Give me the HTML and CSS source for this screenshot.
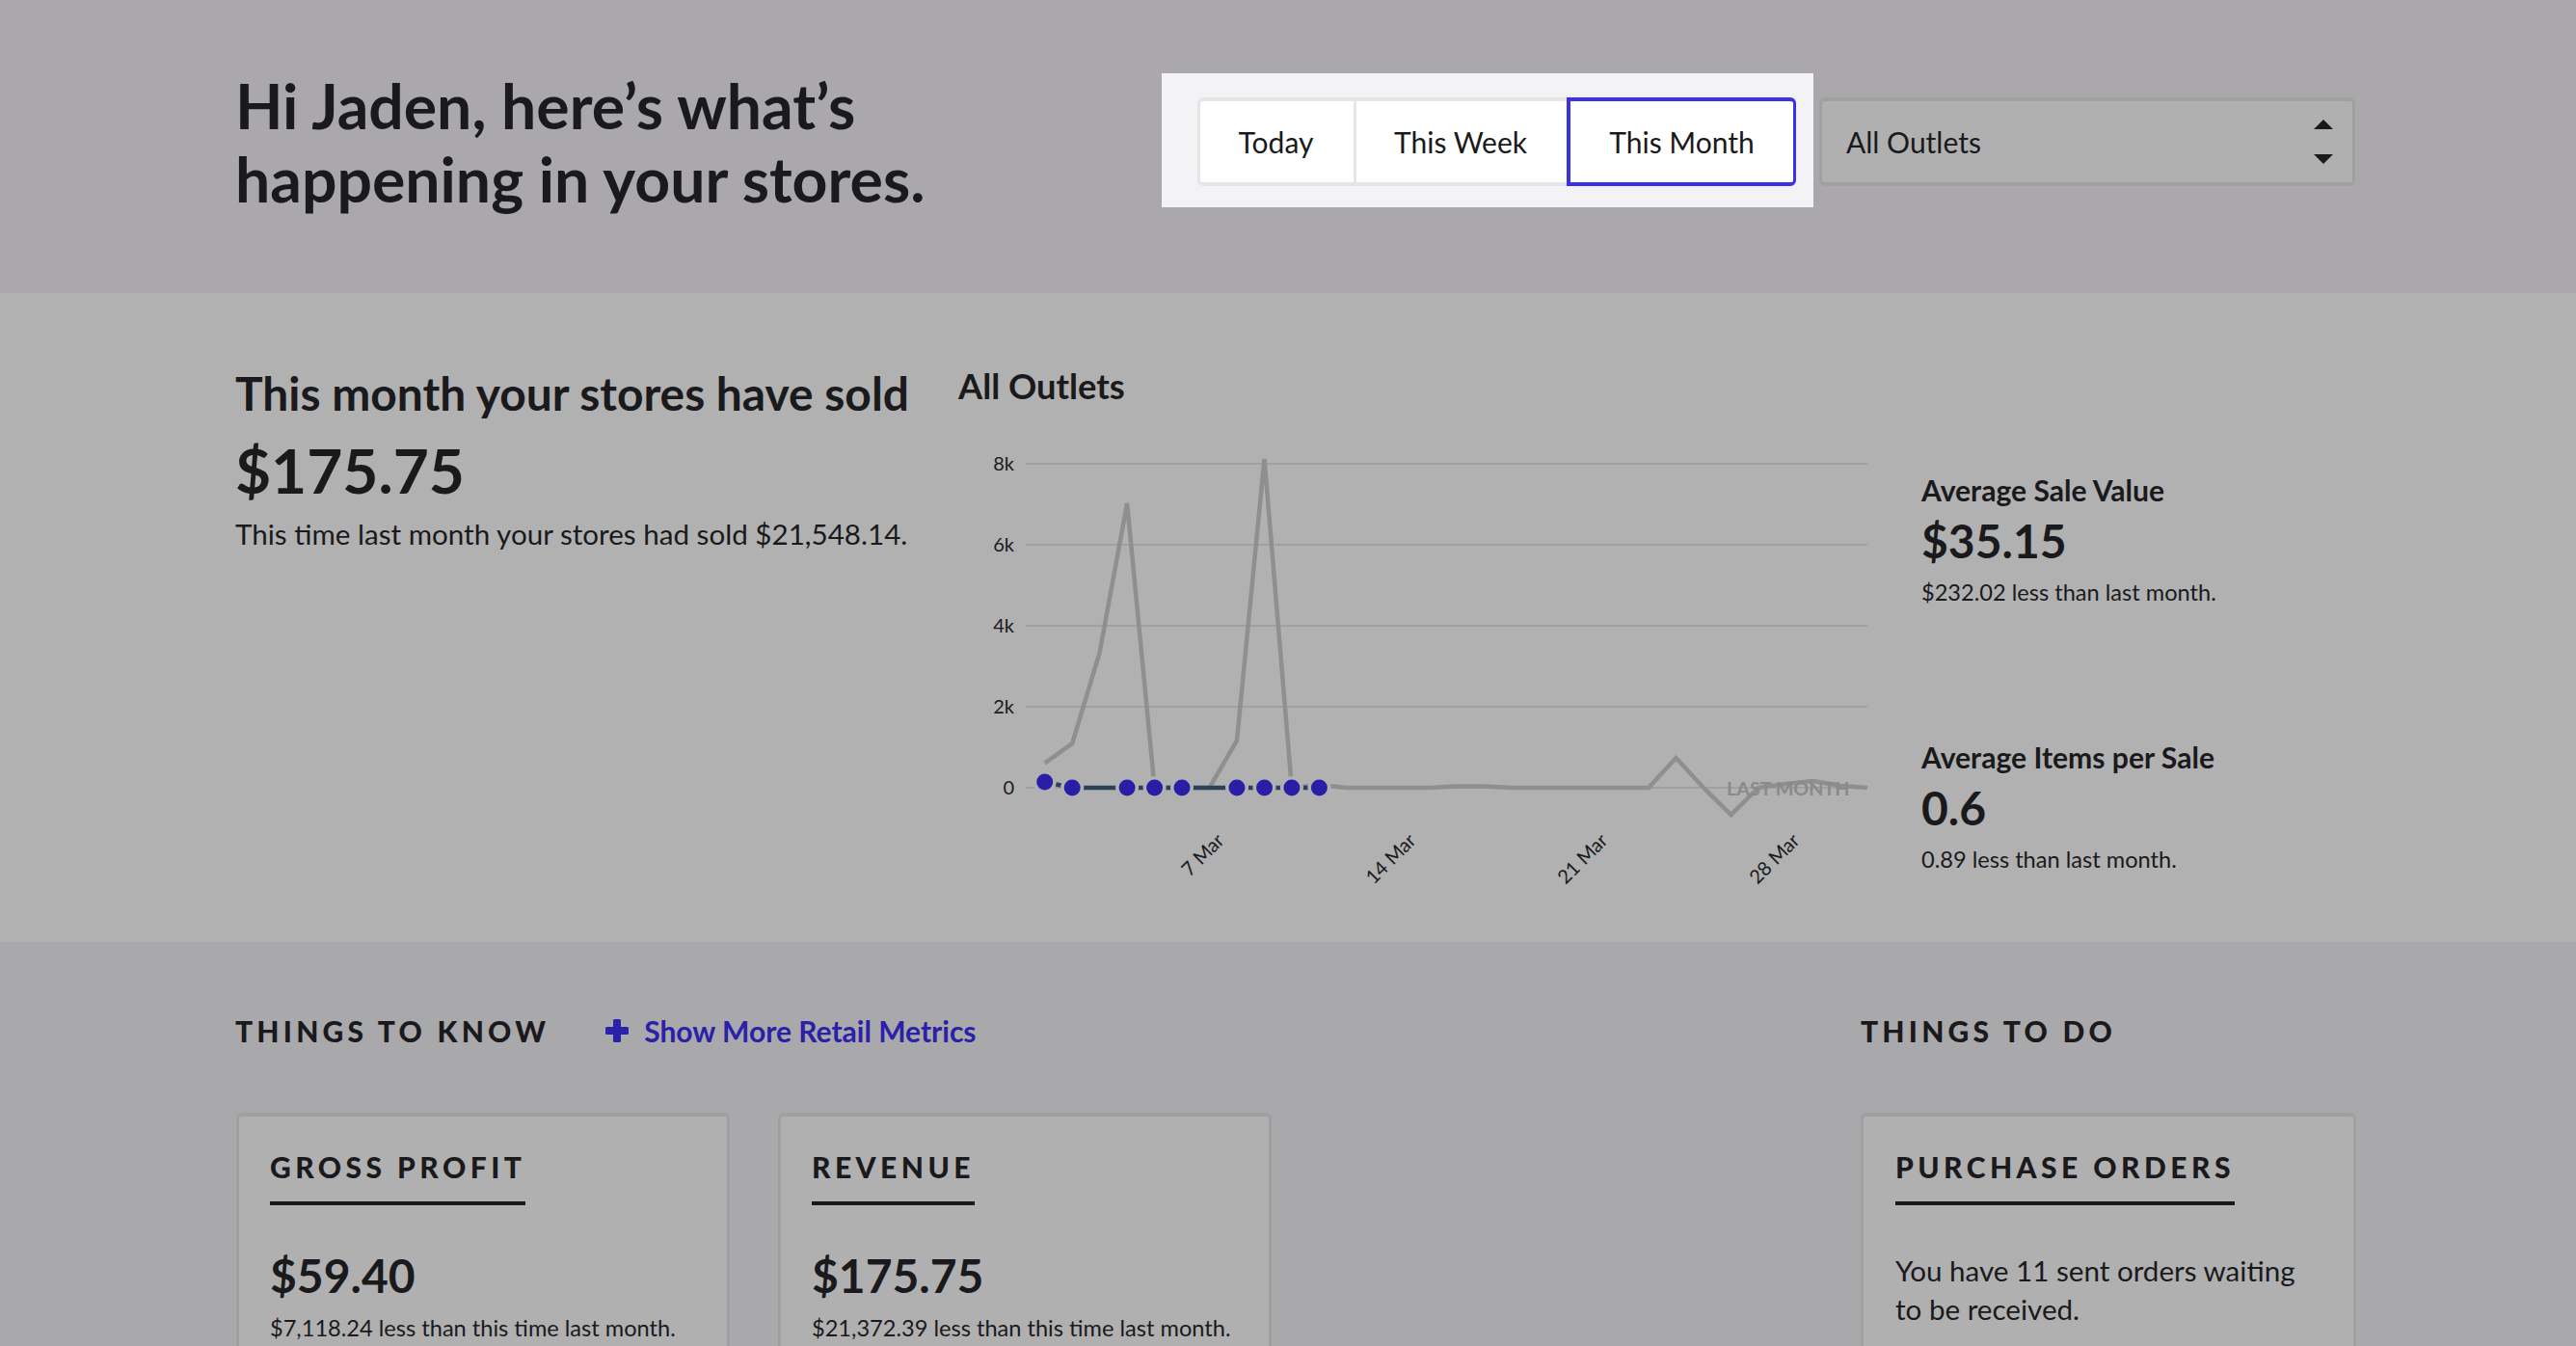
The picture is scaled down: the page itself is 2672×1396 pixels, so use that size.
FILE: index.html
```html
<!DOCTYPE html>
<html lang="en">
<head>
<meta charset="utf-8">
<title>Dashboard</title>
<link rel="stylesheet" href="styles.css">
</head>
<body>
<header class="hero">
  <div class="wrap hero-row">
    <h1 class="greeting">Hi Jaden, here’s what’s<br>happening in your stores.</h1>
    <div class="spot">
      <div class="seg">
        <button class="seg-btn">Today</button>
        <button class="seg-btn">This Week</button>
        <button class="seg-btn active">This Month</button>
      </div>
    </div>
    <div class="select">
      <span>All Outlets</span>
      <span class="arrows"><i class="up"></i><i class="down"></i></span>
    </div>
  </div>
</header>
<section class="sales">
  <div class="wrap sales-row">
    <div class="summary">
      <h2>This month your stores have sold</h2>
      <div class="big">$175.75</div>
      <p>This time last month your stores had sold $21,548.14.</p>
    </div>
    <div class="chart">
      <h3>All Outlets</h3>
      <svg class="plot" width="950" height="510" viewBox="0 0 950 510" xmlns="http://www.w3.org/2000/svg">
        <g transform="translate(-993 -420)">
          <g class="grid">
            <line x1="1063" x2="1936" y1="481" y2="481"/>
            <line x1="1063" x2="1936" y1="565" y2="565"/>
            <line x1="1063" x2="1936" y1="649" y2="649"/>
            <line x1="1063" x2="1936" y1="733" y2="733"/>
            <line x1="1063" x2="1936" y1="817" y2="817"/>
          </g>
          <g class="ylab">
            <text x="1051" y="488">8k</text>
            <text x="1051" y="572">6k</text>
            <text x="1051" y="656">4k</text>
            <text x="1051" y="740">2k</text>
            <text x="1051" y="824">0</text>
          </g>
          <polyline class="last" points="1082.7,791.5 1111.2,771 1139.6,677 1168.1,522 1196.6,817 1225,817 1253.5,817 1282,768 1310.5,476 1338.9,817 1367.4,814 1395.9,817 1424.3,817 1452.8,817 1481.3,817 1509.8,815.5 1538.2,815.5 1566.7,817 1595.2,817 1623.6,817 1652.1,817 1680.6,817 1709,817 1737.5,786 1766,817 1794.5,845 1822.9,817 1851.4,813 1879.9,810 1908.3,815 1936,817"/>
          <text class="lastlab" x="1790" y="825">LAST MONTH</text>
          <polyline class="cur" points="1082.7,811 1111.2,817 1139.6,817 1168.1,817 1196.6,817 1225,817 1253.5,817 1282,817 1310.5,817 1338.9,817 1367.4,817"/>
          <g class="dots">
            <circle cx="1082.7" cy="811" r="8.5"/>
            <circle cx="1111.2" cy="817" r="8.5"/>
            <circle cx="1168.1" cy="817" r="8.5"/>
            <circle cx="1196.6" cy="817" r="8.5"/>
            <circle cx="1225" cy="817" r="8.5"/>
            <circle cx="1282" cy="817" r="8.5"/>
            <circle cx="1310.5" cy="817" r="8.5"/>
            <circle cx="1338.9" cy="817" r="8.5"/>
            <circle cx="1367.4" cy="817" r="8.5"/>
          </g>
          <g class="xlab">
            <text transform="translate(1270 873) rotate(-45)">7 Mar</text>
            <text transform="translate(1469 873) rotate(-45)">14 Mar</text>
            <text transform="translate(1668 873) rotate(-45)">21 Mar</text>
            <text transform="translate(1867 873) rotate(-45)">28 Mar</text>
          </g>
        </g>
      </svg>
    </div>
    <div class="stats">
      <div class="stat">
        <h4>Average Sale Value</h4>
        <div class="num">$35.15</div>
        <p>$232.02 less than last month.</p>
      </div>
      <div class="stat">
        <h4>Average Items per Sale</h4>
        <div class="num">0.6</div>
        <p>0.89 less than last month.</p>
      </div>
    </div>
  </div>
</section>
<section class="lower">
  <div class="wrap lower-row">
    <div class="know">
      <div class="sec-head">
        <h5>THINGS TO KNOW</h5>
        <a class="more" href="#"><svg class="plus" width="24" height="24" viewBox="0 0 24 24" xmlns="http://www.w3.org/2000/svg"><rect x="0" y="8" width="24" height="8" rx="1.5"/><rect x="8" y="0" width="8" height="24" rx="1.5"/></svg>Show More Retail Metrics</a>
      </div>
      <div class="cards">
        <article class="card">
          <span class="card-title">GROSS PROFIT</span>
          <div class="num">$59.40</div>
          <p>$7,118.24 less than this time last month.</p>
        </article>
        <article class="card">
          <span class="card-title">REVENUE</span>
          <div class="num">$175.75</div>
          <p>$21,372.39 less than this time last month.</p>
        </article>
      </div>
    </div>
    <div class="todo">
      <div class="sec-head">
        <h5>THINGS TO DO</h5>
      </div>
      <article class="card">
        <span class="card-title">PURCHASE ORDERS</span>
        <p class="todo-text">You have 11 sent orders waiting to be received.</p>
      </article>
    </div>
  </div>
</section>
</body>
</html>
```
FILE: styles.css
```css
* { box-sizing: border-box; }
html, body { margin: 0; padding: 0; height: 100%; overflow: hidden; }
body { font-family: Lato, "Liberation Sans", sans-serif; color: #1a1a1d; background: #a9a8aa; }
h1, h2, h3, h4, h5, p { margin: 0; }
.wrap { width: 2200px; margin-left: 244px; }

.hero { height: 304px; background: #aaa8ab; }
.hero-row { display: flex; align-items: flex-start; }
.greeting { font-size: 64.3px; line-height: 76px; font-weight: 700; width: 961px; padding-top: 72px; }
.spot { margin-top: 76px; padding: 25px 18px 22px 37px; background: #f3f2f5; }
.seg { display: flex; width: 621px; height: 92px; }
.seg-btn { height: 92px; font: 400 30px Lato, sans-serif; color: #1a1a1d; background: #fff; border: solid #e6e5e8; border-width: 4px 0 4px 3px; padding: 0; }
.seg-btn:nth-child(1) { width: 162px; border-radius: 6px 0 0 6px; padding-right: 2px; }
.seg-btn:nth-child(2) { width: 221px; padding-right: 2px; }
.seg-btn.active { width: 238px; border: solid #3a31e8; border-width: 4px 3px 4px 4px; border-radius: 0 6px 6px 0; }
.select { margin: 101px 0 0 6px; width: 556px; height: 92px; border: solid #a09fa1; border-width: 4px 3px; border-radius: 6px; background: #b0b0b0; display: flex; align-items: center; justify-content: space-between; padding: 0 20px 0 25px; font-size: 30px; }
.arrows { display: flex; flex-direction: column; gap: 26px; }
.arrows i { display: block; width: 0; height: 0; border-left: 10px solid transparent; border-right: 10px solid transparent; }
.up { border-bottom: 10px solid #1a1a1d; }
.down { border-top: 10px solid #1a1a1d; }

.sales { height: 673px; background: #b1b1b1; }
.sales-row { display: flex; align-items: flex-start; }
.summary { width: 750px; padding-top: 74px; }
.summary h2 { font-size: 47.9px; line-height: 60px; font-weight: 700; }
.big { font-size: 64px; font-weight: 700; line-height: 80px; margin-top: 10px; }
.summary p { font-size: 29.6px; line-height: 40px; margin-top: 6px; }
.chart { width: 999px; padding-top: 76px; }
.chart h3 { font-size: 36.3px; line-height: 40px; font-weight: 700; }
.plot { display: block; }
.grid line { stroke: #a0a0a0; stroke-width: 2; }
.ylab text { font-size: 20px; text-anchor: end; fill: #1a1a1d; }
.xlab text { font-size: 20px; text-anchor: end; fill: #1a1a1d; }
.last { fill: none; stroke: #8f8f8f; stroke-width: 4.5; }
.lastlab { font-size: 19.7px; font-weight: 700; fill: #8a8a8a; }
.cur { fill: none; stroke: #2c4258; stroke-width: 4.5; }
.dots circle { fill: #291fa6; stroke: #b1b1b1; stroke-width: 7; paint-order: stroke; }
.stats { padding-top: 185px; display: flex; flex-direction: column; gap: 134px; }
.stat h4 { font-size: 30.1px; line-height: 38px; font-weight: 700; }
.num { font-size: 48px; line-height: 60px; font-weight: 700; }
.stat .num { margin-top: 4px; }
.stat p { font-size: 23.6px; line-height: 36px; margin-top: 5px; }

.lower { height: 419px; background: #a9a8aa; }
.lower-row { display: flex; justify-content: space-between; }
.know { width: 1100px; }
.todo { width: 514px; }
.sec-head { display: flex; align-items: center; gap: 58px; height: 40px; margin-top: 72px; }
.sec-head h5 { font-size: 30px; font-weight: 900; letter-spacing: 4.25px; line-height: 40px; }
.more { display: flex; align-items: center; gap: 16px; font-size: 30px; font-weight: 700; color: #2b20a8; text-decoration: none; }
.plus { fill: #2b20a8; }
.cards { display: flex; gap: 50px; margin-left: 1px; }
.card { display: block; width: 512px; height: 400px; margin-top: 65px; border: solid #a09fa1; border-width: 4px 3px; border-radius: 6px; background: #b0b0b0; padding: 32px; }
.card-title { display: inline-block; font-size: 30px; font-weight: 900; letter-spacing: 4.45px; line-height: 40px; padding-bottom: 16px; border-bottom: 4px solid #1a1a1d; }
.card .num { margin-top: 43px; }
.card p { font-size: 23.6px; line-height: 34px; margin-top: 7px; }
.todo .card { width: 514px; padding-left: 33px; }
.card .todo-text { font-size: 29.6px; line-height: 40px; margin-top: 48px; }
```
